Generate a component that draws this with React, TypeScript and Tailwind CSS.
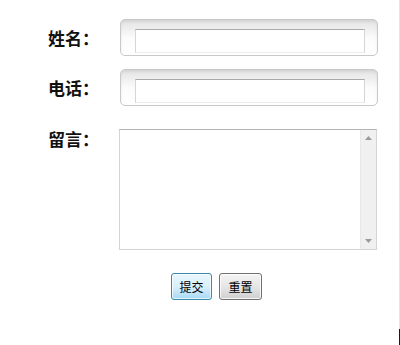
import React from 'react';

const labelFont = { fontFamily: '"Noto Sans CJK SC", "Noto Sans", sans-serif' };

// one rounded field shell with the inset text box inside
const FieldBox: React.FC<{ name: string }> = ({ name }) => (
  <div className="w-[258px] h-[37px] rounded-[5px] border border-[#c9c9c9] bg-gradient-to-b from-[#e3e3e3] via-[#fbfbfb] to-white shadow-[inset_0_2px_3px_rgba(0,0,0,0.07)] pt-[9px] pl-[14px]">
    <input
      name={name}
      className="block w-[230px] h-[24px] bg-white border border-t-[#a9a9a9] border-x-[#d6d6d6] border-b-[#ececec] outline-none px-1 text-[13px]"
    />
  </div>
);

export default function App() {
  return (
    <div className="relative w-[400px] h-[345px] bg-white border-r border-[#dcebdc]" style={labelFont}>
      <form className="pt-[19px] pl-[48px]" onSubmit={e => e.preventDefault()}>
        <div className="flex items-center h-[37px]">
          <label className="w-[72px] text-[17px] font-bold text-[#111] leading-[17px]">姓名：</label>
          <FieldBox name="name" />
        </div>

        <div className="flex items-center h-[37px] mt-[13px]">
          <label className="w-[72px] text-[17px] font-bold text-[#111] leading-[17px]">电话：</label>
          <FieldBox name="phone" />
        </div>

        <div className="flex items-start mt-[23px]">
          <label className="w-[71px] text-[17px] font-bold text-[#111] leading-[17px] pt-px">留言：</label>
          <div className="flex w-[258px] h-[121px] border border-[#d4d4d4] border-t-[#b4b4b4]">
            <textarea name="msg" className="flex-1 resize-none outline-none bg-white text-[13px] p-1" />
            <div className="w-[16px] bg-[#f0f0f0] flex flex-col items-center justify-between py-[6px] border-l border-[#e8e8e8]">
              <svg width="7" height="4" viewBox="0 0 7 4">
                <path d="M0 4 L3.5 0 L7 4 Z" fill="#9a9a9a" />
              </svg>
              <svg width="7" height="4" viewBox="0 0 7 4">
                <path d="M0 0 L3.5 4 L7 0 Z" fill="#9a9a9a" />
              </svg>
            </div>
          </div>
        </div>

        <div className="flex gap-[7px] mt-[23px] ml-[123px]">
          <button
            type="submit"
            className="w-[41px] h-[27px] rounded-[3px] border border-[#3c8ba6] bg-gradient-to-b from-[#eaf6fd] via-[#d9f0fc] to-[#a7d9f5] shadow-[inset_0_0_0_1px_rgba(255,255,255,0.7)] text-[12px] text-black leading-none"
          >
            提交
          </button>
          <button
            type="reset"
            className="w-[43px] h-[27px] rounded-[3px] border border-[#707070] bg-gradient-to-b from-[#f4f4f4] via-[#e6e6e6] to-[#cfcfcf] shadow-[inset_0_0_0_1px_rgba(255,255,255,0.8)] text-[12px] text-black leading-none"
          >
            重置
          </button>
        </div>
      </form>
      <div className="absolute right-[-1px] bottom-0 w-px h-[16px] bg-[#1a1a1a]" />
    </div>
  );
}
